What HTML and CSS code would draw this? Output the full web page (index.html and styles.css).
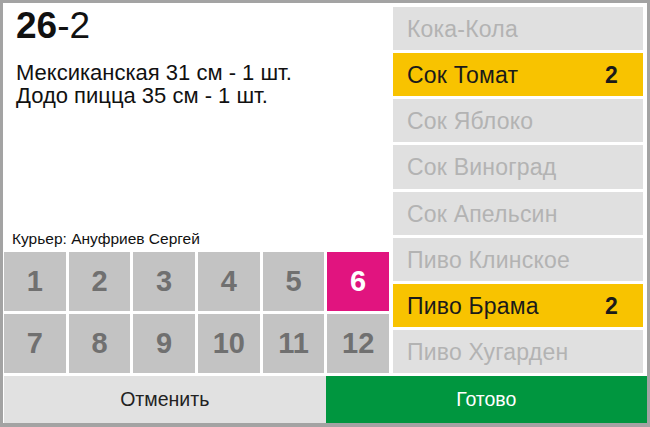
FILE: index.html
```html
<!DOCTYPE html>
<html lang="ru">
<head>
    <meta charset="UTF-8">
    <title>Заказ 26-2</title>
    <link rel="stylesheet" href="styles.css">
</head>
<body>
    <div class="frame">
        <div class="top">
            <div class="order">
                <div class="order-title"><b>26</b>-2</div>
                <div class="order-lines">
                    <div>Мексиканская 31 см - 1 шт.</div>
                    <div>Додо пицца 35 см - 1 шт.</div>
                </div>
                <div class="courier">Курьер: Ануфриев Сергей</div>
                <div class="slots">
                    <div class="slot">1</div>
                    <div class="slot">2</div>
                    <div class="slot">3</div>
                    <div class="slot">4</div>
                    <div class="slot">5</div>
                    <div class="slot active">6</div>
                    <div class="slot">7</div>
                    <div class="slot">8</div>
                    <div class="slot">9</div>
                    <div class="slot">10</div>
                    <div class="slot">11</div>
                    <div class="slot">12</div>
                </div>
            </div>
            <ul class="drinks">
                <li>Кока-Кола</li>
                <li class="picked">Сок Томат <span class="count">2</span></li>
                <li>Сок Яблоко</li>
                <li>Сок Виноград</li>
                <li>Сок Апельсин</li>
                <li>Пиво Клинское</li>
                <li class="picked">Пиво Брама <span class="count">2</span></li>
                <li>Пиво Хугарден</li>
            </ul>
        </div>
        <div class="actions">
            <button class="cancel-btn">Отменить</button>
            <button class="done-btn">Готово</button>
        </div>
    </div>
</body>
</html>
```

FILE: styles.css
```css
body {
    margin: 0;
    padding: 0;
    background: #ffffff;
    font-family: "Liberation Sans", Arial, sans-serif;
}

.frame {
    width: 650px;
    height: 427px;
    box-sizing: border-box;
    border: 3px solid #a3a3a3;
    border-bottom-width: 4px;
    padding: 1px 0 0 1px;
    display: flex;
    flex-direction: column;
    gap: 3px;
    background: #ffffff;
}

.top {
    flex: 1;
    display: flex;
    gap: 4px;
    min-height: 0;
}

.order {
    width: 385px;
    display: flex;
    flex-direction: column;
}

.order-title {
    font-size: 37px;
    line-height: 40px;
    margin: 2px 0 0 12px;
    color: #111;
}

.order-title b {
    font-weight: bold;
}

.order-lines {
    font-size: 22px;
    line-height: 23px;
    margin: 15px 0 0 12px;
    color: #111;
}

.courier {
    margin-top: auto;
    font-size: 15.5px;
    line-height: 18px;
    padding: 0 0 4px 8px;
    color: #111;
}

.slots {
    display: grid;
    grid-template-columns: repeat(6, 1fr);
    grid-auto-rows: 59px;
    gap: 3px;
}

.slot {
    background: #c3c3c3;
    color: #707070;
    font-size: 29px;
    font-weight: bold;
    display: flex;
    align-items: center;
    justify-content: center;
}

.slot.active {
    background: #e1147f;
    color: #ffffff;
}

.drinks {
    list-style-type: none;
    margin: 3px 4px 0 0;
    padding: 0;
    flex: 1;
    display: flex;
    flex-direction: column;
    gap: 3px;
}

.drinks li {
    flex: 1;
    background: #e0e0e0;
    color: #b3b3b3;
    font-size: 23px;
    letter-spacing: 0.2px;
    display: flex;
    align-items: center;
    justify-content: space-between;
    padding: 2px 25px 0 14px;
}

.drinks li.picked {
    background: #f8c300;
    color: #1a1a1a;
}

.count {
    font-weight: bold;
}

.actions {
    height: 47px;
    display: flex;
}

.actions button {
    flex: 1;
    border: none;
    margin: 0;
    font-family: "Liberation Sans", Arial, sans-serif;
    font-size: 19.5px;
    cursor: pointer;
}

.cancel-btn {
    background: #e1e1e1;
    color: #222;
}

.done-btn {
    background: #00963f;
    color: #ffffff;
}
```
